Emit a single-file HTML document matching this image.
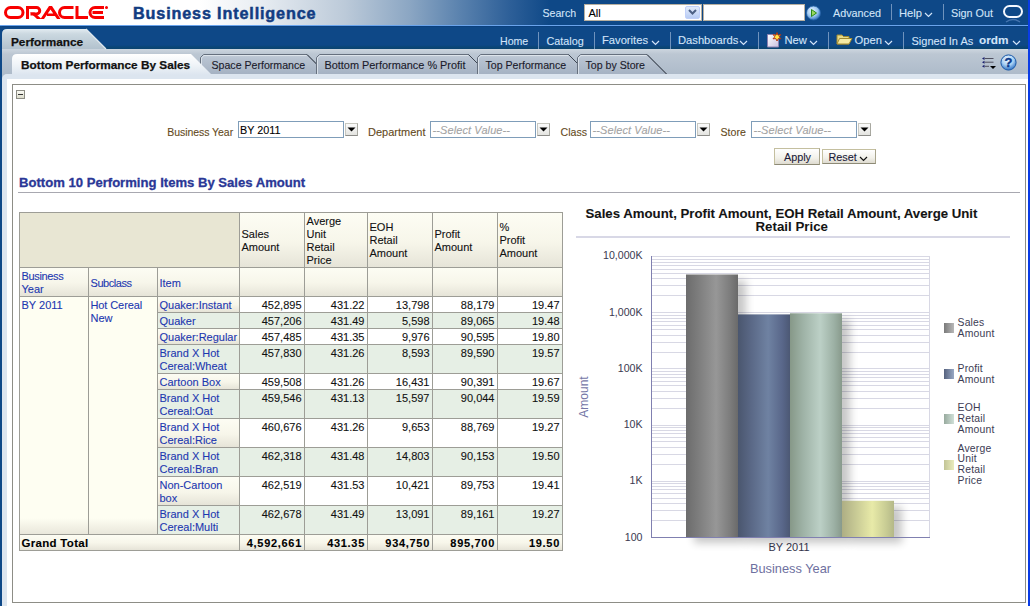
<!DOCTYPE html>
<html><head><meta charset="utf-8"><style>
*{margin:0;padding:0;box-sizing:border-box}
html,body{width:1030px;height:606px;overflow:hidden;background:#fff;font-family:"Liberation Sans",sans-serif}
.a{position:absolute;white-space:nowrap;-webkit-text-stroke:0.1px currentColor}
.c{-webkit-text-stroke:0}
</style></head><body>
<div class="a" style="left:0px;top:0px;width:1030px;height:25px;background:linear-gradient(to right,#fff 0,#fff 200px,#e8edf2 260px,#bccad9 345px,#8ba6c3 410px,#5a82ae 460px,#2d5f98 510px,#0e4887 550px,#0e4887 100%)"></div>
<div class="a" style="left:0px;top:25px;width:1030px;height:1px;background:#6aa4ec"></div>
<div class="a" style="left:0px;top:26px;width:1030px;height:23px;background:linear-gradient(#083a78 0,#0e4887 1px,#0e4887 19px,#0b4677 21px,#0a4470 23px)"></div>
<svg class="a" style="left:0;top:0" width="112" height="25" viewBox="0 0 112 25">
<g fill="none" stroke="#f80000" stroke-width="3">
<rect x="5.5" y="7.5" width="17.5" height="10" rx="5"/>
<path d="M27.5 19V7.5H36.5A3.2 3.2 0 0 1 36.5 14H30.5"/>
<path d="M73.5 7.5H64.5A5 5 0 0 0 64.5 17.5H73.5"/>
<path d="M77 6V17.5H88"/>
<path d="M104 7.5H95A5 5 0 0 0 95 17.5H104M92.5 12.5H103"/>
</g>
<path d="M30 12.5L34.5 12.5L41.5 19L37 19Z" fill="#f80000"/>
<path d="M40.5 19L49 6L52 6L60.5 19L57 19L50.5 9.5L44 19Z M47 13.5H55.5V16H47Z" fill="#f80000"/>
<circle cx="106.5" cy="7.5" r="1.5" fill="#f80000"/>
</svg>
<div class="a" style="left:133px;top:5px;font-size:16.2px;line-height:16.2px;color:#123c82;font-weight:bold;letter-spacing:0.85px;-webkit-text-stroke:0.5px #123c82">Business Intelligence</div>
<div class="a" style="left:542.5px;top:7.800000000000001px;font-size:10.6px;line-height:10.6px;color:#d2e4f8;font-weight:normal;">Search</div>
<div class="a" style="left:584px;top:4px;width:101px;height:17px;background:#fff;border:1px solid #b8b0a0;border-right:0"></div>
<div class="a" style="left:588.5px;top:7.800000000000001px;font-size:11px;line-height:11px;color:#000;font-weight:normal;">All</div>
<div class="a" style="left:685px;top:4px;width:17px;height:17px;background:#fff;border:1px solid #b8b0a0;border-left:0"></div>
<div class="a" style="left:685px;top:6px;width:15px;height:13px;background:linear-gradient(#e3ecfc,#b8ccf4);border:1px solid #c0d0fa;border-radius:2px"></div>
<svg class="a" style="left:687px;top:8px" width="11" height="9"><path d="M2 2L5.5 5.5L9 2" fill="none" stroke="#4d6185" stroke-width="2"/></svg>
<div class="a" style="left:703px;top:4px;width:102px;height:17px;background:#fff;border:1px solid #b8b0a0"></div>
<svg class="a" style="left:806px;top:5px" width="16" height="16"><defs><radialGradient id="gb" cx="40%" cy="35%" r="65%"><stop offset="0" stop-color="#eaf4ff"/><stop offset="0.6" stop-color="#9cc8f0"/><stop offset="1" stop-color="#3a78c0"/></radialGradient></defs><circle cx="7.5" cy="8" r="7" fill="url(#gb)" stroke="#2a64a8" stroke-width="0.8"/><path d="M5.5 4.5L10.5 8L5.5 11.5Z" fill="#9ad860" stroke="#2a8a18" stroke-width="1"/></svg>
<div class="a" style="left:833px;top:7.800000000000001px;font-size:10.8px;line-height:10.8px;color:#d2e4f8;font-weight:normal;">Advanced</div>
<div class="a" style="left:891px;top:4px;width:1px;height:16px;background:#6f93bd"></div>
<div class="a" style="left:899px;top:7.5px;font-size:11.2px;line-height:11.2px;color:#d2e4f8;font-weight:normal;">Help</div>
<svg class="a" style="left:924px;top:11.5px" width="9" height="6"><path d="M1 1L4.5 4.5L8 1" fill="none" stroke="#d2e4f8" stroke-width="1.2"/></svg>
<div class="a" style="left:943px;top:4px;width:1px;height:16px;background:#6f93bd"></div>
<div class="a" style="left:951px;top:7.800000000000001px;font-size:10.8px;line-height:10.8px;color:#d2e4f8;font-weight:normal;">Sign Out</div>
<svg class="a" style="left:1002px;top:4px" width="22" height="20"><rect x="2" y="2" width="18" height="11" rx="5.5" fill="none" stroke="#f4f8ff" stroke-width="2"/><path d="M4 18Q11 13 18 18" fill="none" stroke="#5c88c0" stroke-width="1.5" opacity="0.7"/></svg>
<div class="a" style="left:538px;top:32px;width:1px;height:17px;background:#6f93bd"></div>
<div class="a" style="left:594px;top:32px;width:1px;height:17px;background:#6f93bd"></div>
<div class="a" style="left:670px;top:32px;width:1px;height:17px;background:#6f93bd"></div>
<div class="a" style="left:758px;top:32px;width:1px;height:17px;background:#6f93bd"></div>
<div class="a" style="left:828px;top:32px;width:1px;height:17px;background:#6f93bd"></div>
<div class="a" style="left:903px;top:32px;width:1px;height:17px;background:#6f93bd"></div>
<div class="a" style="left:500px;top:36px;font-size:10.6px;line-height:10.6px;color:#d2e4f8;font-weight:normal;">Home</div>
<div class="a" style="left:546.5px;top:36px;font-size:10.8px;line-height:10.8px;color:#d2e4f8;font-weight:normal;">Catalog</div>
<div class="a" style="left:602px;top:35px;font-size:11.2px;line-height:11.2px;color:#d2e4f8;font-weight:normal;">Favorites</div>
<svg class="a" style="left:651px;top:40px" width="9" height="6"><path d="M1 1L4.5 4.5L8 1" fill="none" stroke="#d2e4f8" stroke-width="1.2"/></svg>
<div class="a" style="left:678px;top:35px;font-size:11.2px;line-height:11.2px;color:#d2e4f8;font-weight:normal;">Dashboards</div>
<svg class="a" style="left:739px;top:40px" width="9" height="6"><path d="M1 1L4.5 4.5L8 1" fill="none" stroke="#d2e4f8" stroke-width="1.2"/></svg>
<svg class="a" style="left:766px;top:32px" width="16" height="16">
<defs><linearGradient id="dg" x1="0" y1="0" x2="1" y2="1"><stop offset="0" stop-color="#fff"/><stop offset="1" stop-color="#c8c0e0"/></linearGradient></defs>
<path d="M1.5 2.5H9L12.5 6V15H1.5Z" fill="url(#dg)" stroke="#8a80b0" stroke-width="1"/>
<path d="M11 0.5L12 3.2L14.8 2.6L13.2 4.8L15 6.8L12.3 6.6L11 9L9.8 6.6L7 6.8L8.8 4.8L7.2 2.6L10 3.2Z" fill="#ffe848" stroke="#b02808" stroke-width="0.9"/></svg>
<div class="a" style="left:784.5px;top:35px;font-size:11.2px;line-height:11.2px;color:#d2e4f8;font-weight:normal;">New</div>
<svg class="a" style="left:809px;top:40px" width="9" height="6"><path d="M1 1L4.5 4.5L8 1" fill="none" stroke="#d2e4f8" stroke-width="1.2"/></svg>
<svg class="a" style="left:836px;top:33px" width="17" height="13">
<path d="M1 2H6L7.5 3.5H13V11H1Z" fill="#e8da88" stroke="#a08a30" stroke-width="1"/>
<path d="M1 11L3.5 5.5H16L13 11Z" fill="#f4eaa4" stroke="#a08a30" stroke-width="1"/></svg>
<div class="a" style="left:854.5px;top:35px;font-size:11.2px;line-height:11.2px;color:#d2e4f8;font-weight:normal;">Open</div>
<svg class="a" style="left:884px;top:40px" width="9" height="6"><path d="M1 1L4.5 4.5L8 1" fill="none" stroke="#d2e4f8" stroke-width="1.2"/></svg>
<div class="a" style="left:911.5px;top:36px;font-size:11.0px;line-height:11.0px;color:#d2e4f8;font-weight:normal;">Signed In As</div>
<div class="a" style="left:979px;top:35px;font-size:11.8px;line-height:11.8px;color:#d2e4f8;font-weight:bold;">ordm</div>
<svg class="a" style="left:1012px;top:40px" width="9" height="6"><path d="M1 1L4.5 4.5L8 1" fill="none" stroke="#d2e4f8" stroke-width="1.2"/></svg>
<div class="a" style="left:0px;top:26px;width:2px;height:580px;background:#0e4887"></div>
<div class="a" style="left:2px;top:49px;width:1026px;height:30px;background:linear-gradient(#cdd6df 0,#bcc7d3 5px,#aebbca 25px,#aebbca 30px)"></div>
<svg class="a" style="left:2px;top:28px" width="108" height="22">
<defs><linearGradient id="pt" x1="0" y1="0" x2="0" y2="1"><stop offset="0" stop-color="#e2ebf0"/><stop offset="0.25" stop-color="#cbd8e0"/><stop offset="1" stop-color="#b2c2ce"/></linearGradient></defs>
<path d="M0 21V6Q0 1 5 1H84L104 21Z" fill="url(#pt)"/>
<path d="M84 1L104 21" stroke="#e0e8ee" stroke-width="1.2"/>
</svg>
<div class="a" style="left:11px;top:37px;font-size:11.8px;line-height:11.8px;color:#111;font-weight:bold;-webkit-text-stroke:0.25px #111">Performance</div>
<div class="a" style="left:2px;top:74px;width:1026px;height:532px;background:#dce5ef;border-top-left-radius:5px"></div>
<div class="a" style="left:7px;top:79px;width:1021px;height:527px;background:#fff"></div>
<div class="a" style="left:12px;top:84px;width:1014px;height:519px;border:1px solid #8d8d86"></div>
<div class="a" style="left:1028px;top:0px;width:2px;height:606px;background:#0a3ce6"></div>
<svg class="a" style="left:200px;top:53px" width="131" height="21">
<defs><linearGradient id="it200" x1="0" y1="0" x2="0" y2="1"><stop offset="0" stop-color="#c4ceda"/><stop offset="0.2" stop-color="#b8c3d1"/><stop offset="1" stop-color="#a4b1c2"/></linearGradient></defs>
<path d="M0.5 22V4.5L3.5 1.5H107L127 21.5V22" fill="url(#it200)" stroke="#66707e" stroke-width="1"/>
<path d="M107 1.5L126.5 21" stroke="#3c4450" stroke-width="1"/>
<path d="M1.5 21V5L4 2.5H106.5" fill="none" stroke="#e4eaf0" stroke-width="1" opacity="0.8"/>
</svg>
<div class="a" style="left:211.5px;top:60px;font-size:10.6px;line-height:10.6px;color:#1a1a2a;font-weight:normal;">Space Performance</div>
<svg class="a" style="left:315.5px;top:53px" width="176.5" height="21">
<defs><linearGradient id="it315" x1="0" y1="0" x2="0" y2="1"><stop offset="0" stop-color="#c4ceda"/><stop offset="0.2" stop-color="#b8c3d1"/><stop offset="1" stop-color="#a4b1c2"/></linearGradient></defs>
<path d="M0.5 22V4.5L3.5 1.5H152.5L172.5 21.5V22" fill="url(#it315)" stroke="#66707e" stroke-width="1"/>
<path d="M152.5 1.5L172.0 21" stroke="#3c4450" stroke-width="1"/>
<path d="M1.5 21V5L4 2.5H152.0" fill="none" stroke="#e4eaf0" stroke-width="1" opacity="0.8"/>
</svg>
<div class="a" style="left:324.5px;top:60px;font-size:10.9px;line-height:10.9px;color:#1a1a2a;font-weight:normal;">Bottom Performance % Profit</div>
<svg class="a" style="left:476.5px;top:53px" width="115.5" height="21">
<defs><linearGradient id="it476" x1="0" y1="0" x2="0" y2="1"><stop offset="0" stop-color="#c4ceda"/><stop offset="0.2" stop-color="#b8c3d1"/><stop offset="1" stop-color="#a4b1c2"/></linearGradient></defs>
<path d="M0.5 22V4.5L3.5 1.5H91.5L111.5 21.5V22" fill="url(#it476)" stroke="#66707e" stroke-width="1"/>
<path d="M91.5 1.5L111.0 21" stroke="#3c4450" stroke-width="1"/>
<path d="M1.5 21V5L4 2.5H91.0" fill="none" stroke="#e4eaf0" stroke-width="1" opacity="0.8"/>
</svg>
<div class="a" style="left:485.5px;top:60px;font-size:10.6px;line-height:10.6px;color:#1a1a2a;font-weight:normal;">Top Performance</div>
<svg class="a" style="left:577px;top:53px" width="94" height="21">
<defs><linearGradient id="it577" x1="0" y1="0" x2="0" y2="1"><stop offset="0" stop-color="#c4ceda"/><stop offset="0.2" stop-color="#b8c3d1"/><stop offset="1" stop-color="#a4b1c2"/></linearGradient></defs>
<path d="M0.5 22V4.5L3.5 1.5H70L90 21.5V22" fill="url(#it577)" stroke="#66707e" stroke-width="1"/>
<path d="M70 1.5L89.5 21" stroke="#3c4450" stroke-width="1"/>
<path d="M1.5 21V5L4 2.5H69.5" fill="none" stroke="#e4eaf0" stroke-width="1" opacity="0.8"/>
</svg>
<div class="a" style="left:585.5px;top:60px;font-size:10.6px;line-height:10.6px;color:#1a1a2a;font-weight:normal;">Top by Store</div>
<svg class="a" style="left:11px;top:53px" width="202" height="22">
<defs><linearGradient id="at" x1="0" y1="0" x2="0" y2="1"><stop offset="0" stop-color="#ffffff"/><stop offset="0.5" stop-color="#f0f4f8"/><stop offset="1" stop-color="#dce5ef"/></linearGradient></defs>
<path d="M1 22V6Q1 1 6 1H180L200 21V22Z" fill="url(#at)"/>
</svg>
<div class="a" style="left:21px;top:59.8px;font-size:11.8px;line-height:11.8px;color:#111;font-weight:bold;-webkit-text-stroke:0.25px #111">Bottom Performance By Sales</div>
<svg class="a" style="left:980px;top:55px" width="18" height="15">
<g fill="#1a2070"><path d="M2 3.5L4.5 2V5Z"/><path d="M2 7.2L4.5 5.7V8.7Z"/><path d="M2 11.3L4.5 9.8V12.8Z"/></g>
<g stroke="#505060" stroke-width="1"><path d="M4.5 3.5H13.5M4.5 7.2H13.5M4.5 11.3H9"/></g>
<path d="M10 11H16L13 14Z" fill="#000"/></svg>
<svg class="a" style="left:1000px;top:54px" width="18" height="18">
<defs><radialGradient id="hg" cx="45%" cy="30%" r="70%"><stop offset="0" stop-color="#f4faff"/><stop offset="0.55" stop-color="#a8d0f4"/><stop offset="1" stop-color="#2c70c4"/></radialGradient></defs>
<circle cx="8.5" cy="8.5" r="7.6" fill="url(#hg)" stroke="#1c5aa8" stroke-width="1"/>
<text x="8.6" y="13.2" text-anchor="middle" font-family="Liberation Sans" font-weight="bold" font-size="13" fill="#0a3a8c" stroke="#0a3a8c" stroke-width="0.4">?</text></svg>
<div class="a" style="left:16px;top:90px;width:9px;height:9px;border:1px solid #8c8c84;background:linear-gradient(#fafaf4,#dcdccc)"></div>
<div class="a" style="left:18px;top:94px;width:5px;height:1px;background:#333"></div>
<div class="a" style="left:167.2px;top:127.0px;font-size:10.5px;line-height:10.5px;color:#644a22;font-weight:normal;letter-spacing:-0.05px">Business Year</div>
<div class="a" style="left:238px;top:121px;width:106px;height:17px;border:1px solid #7f9db9;background:#fff"></div>
<div class="a" style="left:240px;top:125.30000000000001px;font-size:10.8px;line-height:10.8px;color:#000;font-weight:normal;">BY 2011</div>
<div class="a" style="left:345px;top:123px;width:13px;height:13px;background:linear-gradient(#fbfbfb,#e4e4e0);border:1px solid #c8c8c0;border-bottom-color:#8c8c88;border-right-color:#a8a8a0"></div>
<svg class="a" style="left:347px;top:127px" width="9" height="6"><path d="M0.5 0.5H8.5L4.5 4.5Z" fill="#000"/></svg>
<div class="a" style="left:368px;top:127px;font-size:11px;line-height:11px;color:#644a22;font-weight:normal;">Department</div>
<div class="a" style="left:430px;top:121px;width:106px;height:17px;border:1px solid #7f9db9;background:#fff"></div>
<div class="a" style="left:432.5px;top:124.5px;font-size:11px;line-height:11px;color:#a4a4a4;font-weight:normal;font-style:italic;letter-spacing:0.1px">--Select Value--</div>
<div class="a" style="left:537px;top:123px;width:13px;height:13px;background:linear-gradient(#fbfbfb,#e4e4e0);border:1px solid #c8c8c0;border-bottom-color:#8c8c88;border-right-color:#a8a8a0"></div>
<svg class="a" style="left:539px;top:127px" width="9" height="6"><path d="M0.5 0.5H8.5L4.5 4.5Z" fill="#000"/></svg>
<div class="a" style="left:560.5px;top:127px;font-size:10.6px;line-height:10.6px;color:#644a22;font-weight:normal;">Class</div>
<div class="a" style="left:590px;top:121px;width:106px;height:17px;border:1px solid #7f9db9;background:#fff"></div>
<div class="a" style="left:592.5px;top:124.5px;font-size:11px;line-height:11px;color:#a4a4a4;font-weight:normal;font-style:italic;letter-spacing:0.1px">--Select Value--</div>
<div class="a" style="left:697px;top:123px;width:13px;height:13px;background:linear-gradient(#fbfbfb,#e4e4e0);border:1px solid #c8c8c0;border-bottom-color:#8c8c88;border-right-color:#a8a8a0"></div>
<svg class="a" style="left:699px;top:127px" width="9" height="6"><path d="M0.5 0.5H8.5L4.5 4.5Z" fill="#000"/></svg>
<div class="a" style="left:720.5px;top:127px;font-size:10.6px;line-height:10.6px;color:#644a22;font-weight:normal;">Store</div>
<div class="a" style="left:751px;top:121px;width:106px;height:17px;border:1px solid #7f9db9;background:#fff"></div>
<div class="a" style="left:753.5px;top:124.5px;font-size:11px;line-height:11px;color:#a4a4a4;font-weight:normal;font-style:italic;letter-spacing:0.1px">--Select Value--</div>
<div class="a" style="left:858px;top:123px;width:13px;height:13px;background:linear-gradient(#fbfbfb,#e4e4e0);border:1px solid #c8c8c0;border-bottom-color:#8c8c88;border-right-color:#a8a8a0"></div>
<svg class="a" style="left:860px;top:127px" width="9" height="6"><path d="M0.5 0.5H8.5L4.5 4.5Z" fill="#000"/></svg>
<div class="a" style="left:774px;top:148px;width:46px;height:17px;border:1px solid #c4bf9f;border-bottom-color:#8d8a76;border-right-color:#a8a48c;background:linear-gradient(#ffffff,#f2f1ea 60%,#dedbd0)"></div>
<div class="a" style="left:784px;top:152.2px;font-size:10.8px;line-height:10.8px;color:#1a1a3a;font-weight:normal;">Apply</div>
<div class="a" style="left:822px;top:149px;width:54px;height:15px;border:1px solid #c4bf9f;border-bottom-color:#8d8a76;border-right-color:#a8a48c;background:linear-gradient(#ffffff,#f2f1ea 60%,#dedbd0)"></div>
<div class="a" style="left:828.5px;top:152.2px;font-size:10.8px;line-height:10.8px;color:#1a1a3a;font-weight:normal;">Reset</div>
<svg class="a" style="left:859px;top:156px" width="9" height="6"><path d="M1 1L4.5 4.5L8 1" fill="none" stroke="#111" stroke-width="1.2"/></svg>
<div class="a" style="left:19px;top:176.3px;font-size:13.1px;line-height:13.1px;color:#2a3796;font-weight:bold;-webkit-text-stroke:0.3px #2a3796">Bottom 10 Performing Items By Sales Amount</div>
<div class="a" style="left:18px;top:192px;width:1002px;height:1px;background:#a8a8b0"></div>
<div class="a" style="left:19px;top:212px;width:220px;height:55px;background:#e8e6d3"></div>
<div class="a" style="left:239px;top:212px;width:65px;height:55px;background:linear-gradient(#fdfdf4 0,#f7f6ea 55%,#e6e4d8 100%)"></div>
<div class="a" style="left:304px;top:212px;width:63px;height:55px;background:linear-gradient(#fdfdf4 0,#f7f6ea 55%,#e6e4d8 100%)"></div>
<div class="a" style="left:367px;top:212px;width:65px;height:55px;background:linear-gradient(#fdfdf4 0,#f7f6ea 55%,#e6e4d8 100%)"></div>
<div class="a" style="left:432px;top:212px;width:65px;height:55px;background:linear-gradient(#fdfdf4 0,#f7f6ea 55%,#e6e4d8 100%)"></div>
<div class="a" style="left:497px;top:212px;width:65px;height:55px;background:linear-gradient(#fdfdf4 0,#f7f6ea 55%,#e6e4d8 100%)"></div>
<div class="a" style="left:19px;top:267px;width:69px;height:29px;background:linear-gradient(#fdfdf4 0,#f7f6ea 55%,#e6e4d8 100%)"></div>
<div class="a" style="left:88px;top:267px;width:69px;height:29px;background:linear-gradient(#fdfdf4 0,#f7f6ea 55%,#e6e4d8 100%)"></div>
<div class="a" style="left:157px;top:267px;width:82px;height:29px;background:linear-gradient(#fdfdf4 0,#f7f6ea 55%,#e6e4d8 100%)"></div>
<div class="a" style="left:239px;top:267px;width:65px;height:29px;background:linear-gradient(#fdfdf4 0,#f7f6ea 55%,#e6e4d8 100%)"></div>
<div class="a" style="left:304px;top:267px;width:63px;height:29px;background:linear-gradient(#fdfdf4 0,#f7f6ea 55%,#e6e4d8 100%)"></div>
<div class="a" style="left:367px;top:267px;width:65px;height:29px;background:linear-gradient(#fdfdf4 0,#f7f6ea 55%,#e6e4d8 100%)"></div>
<div class="a" style="left:432px;top:267px;width:65px;height:29px;background:linear-gradient(#fdfdf4 0,#f7f6ea 55%,#e6e4d8 100%)"></div>
<div class="a" style="left:497px;top:267px;width:65px;height:29px;background:linear-gradient(#fdfdf4 0,#f7f6ea 55%,#e6e4d8 100%)"></div>
<div class="a" style="left:19px;top:296px;width:138px;height:238px;background:linear-gradient(#fefef2 0,#fefef2 222px,#e9e7db 238px)"></div>
<div class="a" style="left:157px;top:296px;width:82px;height:16px;background:linear-gradient(#fdfdf4 0,#f7f6ea 55%,#e6e4d8 100%)"></div>
<div class="a" style="left:157px;top:312px;width:405px;height:16px;background:#e6efe5"></div>
<div class="a" style="left:157px;top:328px;width:82px;height:16px;background:linear-gradient(#fdfdf4 0,#f7f6ea 55%,#e6e4d8 100%)"></div>
<div class="a" style="left:157px;top:344px;width:405px;height:29px;background:#e6efe5"></div>
<div class="a" style="left:157px;top:373px;width:82px;height:16px;background:linear-gradient(#fdfdf4 0,#f7f6ea 55%,#e6e4d8 100%)"></div>
<div class="a" style="left:157px;top:389px;width:405px;height:29px;background:#e6efe5"></div>
<div class="a" style="left:157px;top:418px;width:82px;height:29px;background:linear-gradient(#fdfdf4 0,#f7f6ea 55%,#e6e4d8 100%)"></div>
<div class="a" style="left:157px;top:447px;width:405px;height:29px;background:#e6efe5"></div>
<div class="a" style="left:157px;top:476px;width:82px;height:29px;background:linear-gradient(#fdfdf4 0,#f7f6ea 55%,#e6e4d8 100%)"></div>
<div class="a" style="left:157px;top:505px;width:405px;height:29px;background:#e6efe5"></div>
<div class="a" style="left:19px;top:534px;width:543px;height:16px;background:linear-gradient(#fdfdf4 0,#f7f6ea 55%,#e6e4d8 100%)"></div>
<div class="a" style="left:19px;top:212px;width:544px;height:1px;background:#9d9d96"></div>
<div class="a" style="left:19px;top:267px;width:544px;height:1px;background:#9d9d96"></div>
<div class="a" style="left:19px;top:296px;width:544px;height:1px;background:#9d9d96"></div>
<div class="a" style="left:157px;top:312px;width:406px;height:1px;background:#9d9d96"></div>
<div class="a" style="left:157px;top:328px;width:406px;height:1px;background:#9d9d96"></div>
<div class="a" style="left:157px;top:344px;width:406px;height:1px;background:#9d9d96"></div>
<div class="a" style="left:157px;top:373px;width:406px;height:1px;background:#9d9d96"></div>
<div class="a" style="left:157px;top:389px;width:406px;height:1px;background:#9d9d96"></div>
<div class="a" style="left:157px;top:418px;width:406px;height:1px;background:#9d9d96"></div>
<div class="a" style="left:157px;top:447px;width:406px;height:1px;background:#9d9d96"></div>
<div class="a" style="left:157px;top:476px;width:406px;height:1px;background:#9d9d96"></div>
<div class="a" style="left:157px;top:505px;width:406px;height:1px;background:#9d9d96"></div>
<div class="a" style="left:19px;top:534px;width:544px;height:1px;background:#9d9d96"></div>
<div class="a" style="left:19px;top:550px;width:544px;height:1px;background:#9d9d96"></div>
<div class="a" style="left:19px;top:212px;width:1px;height:339px;background:#9d9d96"></div>
<div class="a" style="left:239px;top:212px;width:1px;height:339px;background:#9d9d96"></div>
<div class="a" style="left:304px;top:212px;width:1px;height:339px;background:#9d9d96"></div>
<div class="a" style="left:367px;top:212px;width:1px;height:339px;background:#9d9d96"></div>
<div class="a" style="left:432px;top:212px;width:1px;height:339px;background:#9d9d96"></div>
<div class="a" style="left:497px;top:212px;width:1px;height:339px;background:#9d9d96"></div>
<div class="a" style="left:562px;top:212px;width:1px;height:339px;background:#9d9d96"></div>
<div class="a" style="left:88px;top:267px;width:1px;height:267px;background:#9d9d96"></div>
<div class="a" style="left:157px;top:267px;width:1px;height:267px;background:#9d9d96"></div>
<div class="a" style="left:241.5px;top:228.8px;font-size:11px;line-height:11px;color:#111;font-weight:normal;">Sales</div>
<div class="a" style="left:241.5px;top:241.8px;font-size:11px;line-height:11px;color:#111;font-weight:normal;">Amount</div>
<div class="a" style="left:306.5px;top:215.8px;font-size:11px;line-height:11px;color:#111;font-weight:normal;">Averge</div>
<div class="a" style="left:306.5px;top:228.8px;font-size:11px;line-height:11px;color:#111;font-weight:normal;">Unit</div>
<div class="a" style="left:306.5px;top:241.8px;font-size:11px;line-height:11px;color:#111;font-weight:normal;">Retail</div>
<div class="a" style="left:306.5px;top:254.8px;font-size:11px;line-height:11px;color:#111;font-weight:normal;">Price</div>
<div class="a" style="left:369.5px;top:222.3px;font-size:11px;line-height:11px;color:#111;font-weight:normal;">EOH</div>
<div class="a" style="left:369.5px;top:235.3px;font-size:11px;line-height:11px;color:#111;font-weight:normal;">Retail</div>
<div class="a" style="left:369.5px;top:248.3px;font-size:11px;line-height:11px;color:#111;font-weight:normal;">Amount</div>
<div class="a" style="left:434.5px;top:228.8px;font-size:11px;line-height:11px;color:#111;font-weight:normal;">Profit</div>
<div class="a" style="left:434.5px;top:241.8px;font-size:11px;line-height:11px;color:#111;font-weight:normal;">Amount</div>
<div class="a" style="left:499.5px;top:222.3px;font-size:11px;line-height:11px;color:#111;font-weight:normal;">%</div>
<div class="a" style="left:499.5px;top:235.3px;font-size:11px;line-height:11px;color:#111;font-weight:normal;">Profit</div>
<div class="a" style="left:499.5px;top:248.3px;font-size:11px;line-height:11px;color:#111;font-weight:normal;">Amount</div>
<div class="a" style="left:21.5px;top:270.8px;font-size:11px;line-height:11px;color:#1d38b0;font-weight:normal;letter-spacing:-0.35px">Business</div>
<div class="a" style="left:21.5px;top:283.8px;font-size:11px;line-height:11px;color:#1d38b0;font-weight:normal;">Year</div>
<div class="a" style="left:90.5px;top:278px;font-size:11px;line-height:11px;color:#1d38b0;font-weight:normal;letter-spacing:-0.45px">Subclass</div>
<div class="a" style="left:159.5px;top:278px;font-size:11px;line-height:11px;color:#1d38b0;font-weight:normal;">Item</div>
<div class="a" style="left:21.5px;top:299.6px;font-size:11px;line-height:11px;color:#1d38b0;font-weight:normal;">BY 2011</div>
<div class="a" style="left:90.5px;top:299.6px;font-size:11px;line-height:11px;color:#1d38b0;font-weight:normal;letter-spacing:-0.1px">Hot Cereal</div>
<div class="a" style="left:90.5px;top:312.6px;font-size:11px;line-height:11px;color:#1d38b0;font-weight:normal;">New</div>
<div class="a" style="left:159.5px;top:299.8px;font-size:11px;line-height:11px;color:#1d38b0;font-weight:normal;">Quaker:Instant</div>
<div class="a" style="left:201.5px;width:100px;text-align:right;top:299.8px;font-size:11px;line-height:11px;color:#111;font-weight:normal;letter-spacing:0px">452,895</div>
<div class="a" style="left:264.5px;width:100px;text-align:right;top:299.8px;font-size:11px;line-height:11px;color:#111;font-weight:normal;letter-spacing:0px">431.22</div>
<div class="a" style="left:329.5px;width:100px;text-align:right;top:299.8px;font-size:11px;line-height:11px;color:#111;font-weight:normal;letter-spacing:0px">13,798</div>
<div class="a" style="left:394.5px;width:100px;text-align:right;top:299.8px;font-size:11px;line-height:11px;color:#111;font-weight:normal;letter-spacing:0px">88,179</div>
<div class="a" style="left:459.5px;width:100px;text-align:right;top:299.8px;font-size:11px;line-height:11px;color:#111;font-weight:normal;letter-spacing:0px">19.47</div>
<div class="a" style="left:159.5px;top:315.8px;font-size:11px;line-height:11px;color:#1d38b0;font-weight:normal;">Quaker</div>
<div class="a" style="left:201.5px;width:100px;text-align:right;top:315.8px;font-size:11px;line-height:11px;color:#111;font-weight:normal;letter-spacing:0px">457,206</div>
<div class="a" style="left:264.5px;width:100px;text-align:right;top:315.8px;font-size:11px;line-height:11px;color:#111;font-weight:normal;letter-spacing:0px">431.49</div>
<div class="a" style="left:329.5px;width:100px;text-align:right;top:315.8px;font-size:11px;line-height:11px;color:#111;font-weight:normal;letter-spacing:0px">5,598</div>
<div class="a" style="left:394.5px;width:100px;text-align:right;top:315.8px;font-size:11px;line-height:11px;color:#111;font-weight:normal;letter-spacing:0px">89,065</div>
<div class="a" style="left:459.5px;width:100px;text-align:right;top:315.8px;font-size:11px;line-height:11px;color:#111;font-weight:normal;letter-spacing:0px">19.48</div>
<div class="a" style="left:159.5px;top:331.8px;font-size:11px;line-height:11px;color:#1d38b0;font-weight:normal;">Quaker:Regular</div>
<div class="a" style="left:201.5px;width:100px;text-align:right;top:331.8px;font-size:11px;line-height:11px;color:#111;font-weight:normal;letter-spacing:0px">457,485</div>
<div class="a" style="left:264.5px;width:100px;text-align:right;top:331.8px;font-size:11px;line-height:11px;color:#111;font-weight:normal;letter-spacing:0px">431.35</div>
<div class="a" style="left:329.5px;width:100px;text-align:right;top:331.8px;font-size:11px;line-height:11px;color:#111;font-weight:normal;letter-spacing:0px">9,976</div>
<div class="a" style="left:394.5px;width:100px;text-align:right;top:331.8px;font-size:11px;line-height:11px;color:#111;font-weight:normal;letter-spacing:0px">90,595</div>
<div class="a" style="left:459.5px;width:100px;text-align:right;top:331.8px;font-size:11px;line-height:11px;color:#111;font-weight:normal;letter-spacing:0px">19.80</div>
<div class="a" style="left:159.5px;top:347.8px;font-size:11px;line-height:11px;color:#1d38b0;font-weight:normal;">Brand X Hot</div>
<div class="a" style="left:159.5px;top:360.8px;font-size:11px;line-height:11px;color:#1d38b0;font-weight:normal;">Cereal:Wheat</div>
<div class="a" style="left:201.5px;width:100px;text-align:right;top:347.8px;font-size:11px;line-height:11px;color:#111;font-weight:normal;letter-spacing:0px">457,830</div>
<div class="a" style="left:264.5px;width:100px;text-align:right;top:347.8px;font-size:11px;line-height:11px;color:#111;font-weight:normal;letter-spacing:0px">431.26</div>
<div class="a" style="left:329.5px;width:100px;text-align:right;top:347.8px;font-size:11px;line-height:11px;color:#111;font-weight:normal;letter-spacing:0px">8,593</div>
<div class="a" style="left:394.5px;width:100px;text-align:right;top:347.8px;font-size:11px;line-height:11px;color:#111;font-weight:normal;letter-spacing:0px">89,590</div>
<div class="a" style="left:459.5px;width:100px;text-align:right;top:347.8px;font-size:11px;line-height:11px;color:#111;font-weight:normal;letter-spacing:0px">19.57</div>
<div class="a" style="left:159.5px;top:376.8px;font-size:11px;line-height:11px;color:#1d38b0;font-weight:normal;">Cartoon Box</div>
<div class="a" style="left:201.5px;width:100px;text-align:right;top:376.8px;font-size:11px;line-height:11px;color:#111;font-weight:normal;letter-spacing:0px">459,508</div>
<div class="a" style="left:264.5px;width:100px;text-align:right;top:376.8px;font-size:11px;line-height:11px;color:#111;font-weight:normal;letter-spacing:0px">431.26</div>
<div class="a" style="left:329.5px;width:100px;text-align:right;top:376.8px;font-size:11px;line-height:11px;color:#111;font-weight:normal;letter-spacing:0px">16,431</div>
<div class="a" style="left:394.5px;width:100px;text-align:right;top:376.8px;font-size:11px;line-height:11px;color:#111;font-weight:normal;letter-spacing:0px">90,391</div>
<div class="a" style="left:459.5px;width:100px;text-align:right;top:376.8px;font-size:11px;line-height:11px;color:#111;font-weight:normal;letter-spacing:0px">19.67</div>
<div class="a" style="left:159.5px;top:392.8px;font-size:11px;line-height:11px;color:#1d38b0;font-weight:normal;">Brand X Hot</div>
<div class="a" style="left:159.5px;top:405.8px;font-size:11px;line-height:11px;color:#1d38b0;font-weight:normal;">Cereal:Oat</div>
<div class="a" style="left:201.5px;width:100px;text-align:right;top:392.8px;font-size:11px;line-height:11px;color:#111;font-weight:normal;letter-spacing:0px">459,546</div>
<div class="a" style="left:264.5px;width:100px;text-align:right;top:392.8px;font-size:11px;line-height:11px;color:#111;font-weight:normal;letter-spacing:0px">431.13</div>
<div class="a" style="left:329.5px;width:100px;text-align:right;top:392.8px;font-size:11px;line-height:11px;color:#111;font-weight:normal;letter-spacing:0px">15,597</div>
<div class="a" style="left:394.5px;width:100px;text-align:right;top:392.8px;font-size:11px;line-height:11px;color:#111;font-weight:normal;letter-spacing:0px">90,044</div>
<div class="a" style="left:459.5px;width:100px;text-align:right;top:392.8px;font-size:11px;line-height:11px;color:#111;font-weight:normal;letter-spacing:0px">19.59</div>
<div class="a" style="left:159.5px;top:421.8px;font-size:11px;line-height:11px;color:#1d38b0;font-weight:normal;">Brand X Hot</div>
<div class="a" style="left:159.5px;top:434.8px;font-size:11px;line-height:11px;color:#1d38b0;font-weight:normal;">Cereal:Rice</div>
<div class="a" style="left:201.5px;width:100px;text-align:right;top:421.8px;font-size:11px;line-height:11px;color:#111;font-weight:normal;letter-spacing:0px">460,676</div>
<div class="a" style="left:264.5px;width:100px;text-align:right;top:421.8px;font-size:11px;line-height:11px;color:#111;font-weight:normal;letter-spacing:0px">431.26</div>
<div class="a" style="left:329.5px;width:100px;text-align:right;top:421.8px;font-size:11px;line-height:11px;color:#111;font-weight:normal;letter-spacing:0px">9,653</div>
<div class="a" style="left:394.5px;width:100px;text-align:right;top:421.8px;font-size:11px;line-height:11px;color:#111;font-weight:normal;letter-spacing:0px">88,769</div>
<div class="a" style="left:459.5px;width:100px;text-align:right;top:421.8px;font-size:11px;line-height:11px;color:#111;font-weight:normal;letter-spacing:0px">19.27</div>
<div class="a" style="left:159.5px;top:450.8px;font-size:11px;line-height:11px;color:#1d38b0;font-weight:normal;">Brand X Hot</div>
<div class="a" style="left:159.5px;top:463.8px;font-size:11px;line-height:11px;color:#1d38b0;font-weight:normal;">Cereal:Bran</div>
<div class="a" style="left:201.5px;width:100px;text-align:right;top:450.8px;font-size:11px;line-height:11px;color:#111;font-weight:normal;letter-spacing:0px">462,318</div>
<div class="a" style="left:264.5px;width:100px;text-align:right;top:450.8px;font-size:11px;line-height:11px;color:#111;font-weight:normal;letter-spacing:0px">431.48</div>
<div class="a" style="left:329.5px;width:100px;text-align:right;top:450.8px;font-size:11px;line-height:11px;color:#111;font-weight:normal;letter-spacing:0px">14,803</div>
<div class="a" style="left:394.5px;width:100px;text-align:right;top:450.8px;font-size:11px;line-height:11px;color:#111;font-weight:normal;letter-spacing:0px">90,153</div>
<div class="a" style="left:459.5px;width:100px;text-align:right;top:450.8px;font-size:11px;line-height:11px;color:#111;font-weight:normal;letter-spacing:0px">19.50</div>
<div class="a" style="left:159.5px;top:479.8px;font-size:11px;line-height:11px;color:#1d38b0;font-weight:normal;">Non-Cartoon</div>
<div class="a" style="left:159.5px;top:492.8px;font-size:11px;line-height:11px;color:#1d38b0;font-weight:normal;">box</div>
<div class="a" style="left:201.5px;width:100px;text-align:right;top:479.8px;font-size:11px;line-height:11px;color:#111;font-weight:normal;letter-spacing:0px">462,519</div>
<div class="a" style="left:264.5px;width:100px;text-align:right;top:479.8px;font-size:11px;line-height:11px;color:#111;font-weight:normal;letter-spacing:0px">431.53</div>
<div class="a" style="left:329.5px;width:100px;text-align:right;top:479.8px;font-size:11px;line-height:11px;color:#111;font-weight:normal;letter-spacing:0px">10,421</div>
<div class="a" style="left:394.5px;width:100px;text-align:right;top:479.8px;font-size:11px;line-height:11px;color:#111;font-weight:normal;letter-spacing:0px">89,753</div>
<div class="a" style="left:459.5px;width:100px;text-align:right;top:479.8px;font-size:11px;line-height:11px;color:#111;font-weight:normal;letter-spacing:0px">19.41</div>
<div class="a" style="left:159.5px;top:508.79999999999995px;font-size:11px;line-height:11px;color:#1d38b0;font-weight:normal;">Brand X Hot</div>
<div class="a" style="left:159.5px;top:521.8px;font-size:11px;line-height:11px;color:#1d38b0;font-weight:normal;">Cereal:Multi</div>
<div class="a" style="left:201.5px;width:100px;text-align:right;top:508.79999999999995px;font-size:11px;line-height:11px;color:#111;font-weight:normal;letter-spacing:0px">462,678</div>
<div class="a" style="left:264.5px;width:100px;text-align:right;top:508.79999999999995px;font-size:11px;line-height:11px;color:#111;font-weight:normal;letter-spacing:0px">431.49</div>
<div class="a" style="left:329.5px;width:100px;text-align:right;top:508.79999999999995px;font-size:11px;line-height:11px;color:#111;font-weight:normal;letter-spacing:0px">13,091</div>
<div class="a" style="left:394.5px;width:100px;text-align:right;top:508.79999999999995px;font-size:11px;line-height:11px;color:#111;font-weight:normal;letter-spacing:0px">89,161</div>
<div class="a" style="left:459.5px;width:100px;text-align:right;top:508.79999999999995px;font-size:11px;line-height:11px;color:#111;font-weight:normal;letter-spacing:0px">19.27</div>
<div class="a" style="left:21.5px;top:538px;font-size:11.5px;line-height:11.5px;color:#000;font-weight:bold;letter-spacing:0.3px">Grand Total</div>
<div class="a" style="left:202px;width:100px;text-align:right;top:537.5px;font-size:11px;line-height:11px;color:#000;font-weight:bold;letter-spacing:0.7px">4,592,661</div>
<div class="a" style="left:265px;width:100px;text-align:right;top:537.5px;font-size:11px;line-height:11px;color:#000;font-weight:bold;letter-spacing:0.7px">431.35</div>
<div class="a" style="left:330px;width:100px;text-align:right;top:537.5px;font-size:11px;line-height:11px;color:#000;font-weight:bold;letter-spacing:0.7px">934,750</div>
<div class="a" style="left:395px;width:100px;text-align:right;top:537.5px;font-size:11px;line-height:11px;color:#000;font-weight:bold;letter-spacing:0.7px">895,700</div>
<div class="a" style="left:460px;width:100px;text-align:right;top:537.5px;font-size:11px;line-height:11px;color:#000;font-weight:bold;letter-spacing:0.7px">19.50</div>
<div class="a" style="left:585.5px;top:206.5px;font-size:13.22px;line-height:13.22px;color:#141414;font-weight:bold;-webkit-font-smoothing:antialiased">Sales Amount, Profit Amount, EOH Retail Amount, Averge Unit</div>
<div class="a" style="left:755.5px;top:219.5px;font-size:13.3px;line-height:13.3px;color:#141414;font-weight:bold;-webkit-text-stroke:0">Retail Price</div>
<div class="a" style="left:576px;top:236px;width:434px;height:2px;background:#d8d8e6"></div>
<svg class="a" style="left:0;top:0" width="1030" height="606"><defs><linearGradient id="b1" x1="0" y1="0" x2="1" y2="0"><stop offset="0" stop-color="#6c6c6c"/><stop offset="0.25" stop-color="#7e7e7e"/><stop offset="0.58" stop-color="#979797"/><stop offset="0.85" stop-color="#7c7c7c"/><stop offset="1" stop-color="#6a6a6a"/></linearGradient><linearGradient id="b2" x1="0" y1="0" x2="1" y2="0"><stop offset="0" stop-color="#4a566e"/><stop offset="0.25" stop-color="#5a6886"/><stop offset="0.58" stop-color="#6f82a2"/><stop offset="0.85" stop-color="#59678a"/><stop offset="1" stop-color="#4c5874"/></linearGradient><linearGradient id="b3" x1="0" y1="0" x2="1" y2="0"><stop offset="0" stop-color="#869888"/><stop offset="0.25" stop-color="#9eb2a6"/><stop offset="0.58" stop-color="#bcd0c6"/><stop offset="0.85" stop-color="#9cb0a4"/><stop offset="1" stop-color="#889a8c"/></linearGradient><linearGradient id="b4" x1="0" y1="0" x2="1" y2="0"><stop offset="0" stop-color="#aeae84"/><stop offset="0.25" stop-color="#c6c894"/><stop offset="0.58" stop-color="#e8eaa8"/><stop offset="0.85" stop-color="#c8cc94"/><stop offset="1" stop-color="#b4b888"/></linearGradient><linearGradient id="l1" x1="0" y1="0" x2="1" y2="0"><stop offset="0" stop-color="#7a7a7a"/><stop offset="1" stop-color="#b8b8b8"/></linearGradient><linearGradient id="l2" x1="0" y1="0" x2="1" y2="0"><stop offset="0" stop-color="#56627e"/><stop offset="1" stop-color="#98a8c4"/></linearGradient><linearGradient id="l3" x1="0" y1="0" x2="1" y2="0"><stop offset="0" stop-color="#98aa9e"/><stop offset="1" stop-color="#d0e0d8"/></linearGradient><linearGradient id="l4" x1="0" y1="0" x2="1" y2="0"><stop offset="0" stop-color="#c2c496"/><stop offset="1" stop-color="#eaecbc"/></linearGradient><filter id="sh" x="-30%" y="-30%" width="160%" height="160%"><feGaussianBlur stdDeviation="4"/></filter></defs><line x1="651" x2="929" y1="537.5" y2="537.5" stroke="#d8d8e4" stroke-width="1"/><line x1="651" x2="929" y1="520.5" y2="520.5" stroke="#d8d8e4" stroke-width="1"/><line x1="651" x2="929" y1="510.5" y2="510.5" stroke="#d8d8e4" stroke-width="1"/><line x1="651" x2="929" y1="503.5" y2="503.5" stroke="#d8d8e4" stroke-width="1"/><line x1="651" x2="929" y1="498.5" y2="498.5" stroke="#d8d8e4" stroke-width="1"/><line x1="651" x2="929" y1="493.5" y2="493.5" stroke="#d8d8e4" stroke-width="1"/><line x1="651" x2="929" y1="489.5" y2="489.5" stroke="#d8d8e4" stroke-width="1"/><line x1="651" x2="929" y1="486.5" y2="486.5" stroke="#d8d8e4" stroke-width="1"/><line x1="651" x2="929" y1="483.5" y2="483.5" stroke="#d8d8e4" stroke-width="1"/><line x1="651" x2="929" y1="481.5" y2="481.5" stroke="#d8d8e4" stroke-width="1"/><line x1="651" x2="929" y1="464.5" y2="464.5" stroke="#d8d8e4" stroke-width="1"/><line x1="651" x2="929" y1="454.5" y2="454.5" stroke="#d8d8e4" stroke-width="1"/><line x1="651" x2="929" y1="447.5" y2="447.5" stroke="#d8d8e4" stroke-width="1"/><line x1="651" x2="929" y1="441.5" y2="441.5" stroke="#d8d8e4" stroke-width="1"/><line x1="651" x2="929" y1="437.5" y2="437.5" stroke="#d8d8e4" stroke-width="1"/><line x1="651" x2="929" y1="433.5" y2="433.5" stroke="#d8d8e4" stroke-width="1"/><line x1="651" x2="929" y1="430.5" y2="430.5" stroke="#d8d8e4" stroke-width="1"/><line x1="651" x2="929" y1="427.5" y2="427.5" stroke="#d8d8e4" stroke-width="1"/><line x1="651" x2="929" y1="425.5" y2="425.5" stroke="#d8d8e4" stroke-width="1"/><line x1="651" x2="929" y1="408.5" y2="408.5" stroke="#d8d8e4" stroke-width="1"/><line x1="651" x2="929" y1="398.5" y2="398.5" stroke="#d8d8e4" stroke-width="1"/><line x1="651" x2="929" y1="391.5" y2="391.5" stroke="#d8d8e4" stroke-width="1"/><line x1="651" x2="929" y1="385.5" y2="385.5" stroke="#d8d8e4" stroke-width="1"/><line x1="651" x2="929" y1="381.5" y2="381.5" stroke="#d8d8e4" stroke-width="1"/><line x1="651" x2="929" y1="377.5" y2="377.5" stroke="#d8d8e4" stroke-width="1"/><line x1="651" x2="929" y1="374.5" y2="374.5" stroke="#d8d8e4" stroke-width="1"/><line x1="651" x2="929" y1="371.5" y2="371.5" stroke="#d8d8e4" stroke-width="1"/><line x1="651" x2="929" y1="368.5" y2="368.5" stroke="#d8d8e4" stroke-width="1"/><line x1="651" x2="929" y1="352.5" y2="352.5" stroke="#d8d8e4" stroke-width="1"/><line x1="651" x2="929" y1="342.5" y2="342.5" stroke="#d8d8e4" stroke-width="1"/><line x1="651" x2="929" y1="335.5" y2="335.5" stroke="#d8d8e4" stroke-width="1"/><line x1="651" x2="929" y1="329.5" y2="329.5" stroke="#d8d8e4" stroke-width="1"/><line x1="651" x2="929" y1="325.5" y2="325.5" stroke="#d8d8e4" stroke-width="1"/><line x1="651" x2="929" y1="321.5" y2="321.5" stroke="#d8d8e4" stroke-width="1"/><line x1="651" x2="929" y1="318.5" y2="318.5" stroke="#d8d8e4" stroke-width="1"/><line x1="651" x2="929" y1="315.5" y2="315.5" stroke="#d8d8e4" stroke-width="1"/><line x1="651" x2="929" y1="312.5" y2="312.5" stroke="#d8d8e4" stroke-width="1"/><line x1="651" x2="929" y1="295.5" y2="295.5" stroke="#d8d8e4" stroke-width="1"/><line x1="651" x2="929" y1="285.5" y2="285.5" stroke="#d8d8e4" stroke-width="1"/><line x1="651" x2="929" y1="278.5" y2="278.5" stroke="#d8d8e4" stroke-width="1"/><line x1="651" x2="929" y1="273.5" y2="273.5" stroke="#d8d8e4" stroke-width="1"/><line x1="651" x2="929" y1="269.5" y2="269.5" stroke="#d8d8e4" stroke-width="1"/><line x1="651" x2="929" y1="265.5" y2="265.5" stroke="#d8d8e4" stroke-width="1"/><line x1="651" x2="929" y1="262.5" y2="262.5" stroke="#d8d8e4" stroke-width="1"/><line x1="651" x2="929" y1="259.5" y2="259.5" stroke="#d8d8e4" stroke-width="1"/><line x1="651" x2="929" y1="256.5" y2="256.5" stroke="#d8d8e4" stroke-width="1"/><line x1="929.5" x2="929.5" y1="256" y2="537" stroke="#d8d8e4" stroke-width="1"/><rect x="694" y="280.49198129091184" width="52" height="262.50801870908816" fill="#000" opacity="0.22" filter="url(#sh)"/><rect x="746" y="320.3884633291472" width="52" height="222.6115366708528" fill="#000" opacity="0.22" filter="url(#sh)"/><rect x="798" y="319.3469143709643" width="52" height="223.65308562903567" fill="#000" opacity="0.22" filter="url(#sh)"/><rect x="850" y="506.82256510658686" width="52" height="36.177434893413135" fill="#000" opacity="0.22" filter="url(#sh)"/><rect x="686" y="274.5" width="52" height="263.0" fill="url(#b1)"/><rect x="738" y="314.4" width="52" height="223.1" fill="url(#b2)"/><rect x="790" y="313.3" width="52" height="224.2" fill="url(#b3)"/><rect x="842" y="500.8" width="52" height="36.7" fill="url(#b4)"/><line x1="651.5" x2="651.5" y1="256" y2="537" stroke="#8080b0" stroke-width="1"/><line x1="651" x2="930" y1="537.5" y2="537.5" stroke="#8080b0" stroke-width="1"/><rect x="944" y="323" width="10" height="10" fill="url(#l1)"/><rect x="944" y="369" width="10" height="10" fill="url(#l2)"/><rect x="944" y="414" width="10" height="10" fill="url(#l3)"/><rect x="944" y="460" width="10" height="10" fill="url(#l4)"/></svg>
<div class="a c" style="left:542.5px;width:100px;text-align:right;top:250.4px;font-size:10.6px;line-height:11px;color:#3a3a50">10,000K</div>
<div class="a c" style="left:542.5px;width:100px;text-align:right;top:306.7px;font-size:10.6px;line-height:11px;color:#3a3a50">1,000K</div>
<div class="a c" style="left:542.5px;width:100px;text-align:right;top:362.9px;font-size:10.6px;line-height:11px;color:#3a3a50">100K</div>
<div class="a c" style="left:542.5px;width:100px;text-align:right;top:419.2px;font-size:10.6px;line-height:11px;color:#3a3a50">10K</div>
<div class="a c" style="left:542.5px;width:100px;text-align:right;top:475.4px;font-size:10.6px;line-height:11px;color:#3a3a50">1K</div>
<div class="a c" style="left:542.5px;width:100px;text-align:right;top:531.7px;font-size:10.6px;line-height:11px;color:#3a3a50">100</div>
<div class="a c" style="left:563px;top:390px;width:42px;height:14px;font-size:12px;line-height:14px;color:#7476a6;transform:rotate(-90deg);text-align:center">Amount</div>
<div class="a c" style="left:739px;width:100px;text-align:center;top:542px;font-size:11px;line-height:11px;color:#33334a">BY 2011</div>
<div class="a c" style="left:690.5px;width:200px;text-align:center;top:562px;font-size:12.8px;line-height:13px;color:#6e70a0">Business Year</div>
<div class="a c" style="left:957.5px;top:317.4px;font-size:10.4px;line-height:11px;letter-spacing:0.2px;color:#3c3c54">Sales</div>
<div class="a c" style="left:957.5px;top:328.2px;font-size:10.4px;line-height:11px;letter-spacing:0.2px;color:#3c3c54">Amount</div>
<div class="a c" style="left:957.5px;top:363.4px;font-size:10.4px;line-height:11px;letter-spacing:0.2px;color:#3c3c54">Profit</div>
<div class="a c" style="left:957.5px;top:374.2px;font-size:10.4px;line-height:11px;letter-spacing:0.2px;color:#3c3c54">Amount</div>
<div class="a c" style="left:957.5px;top:402.0px;font-size:10.4px;line-height:11px;letter-spacing:0.2px;color:#3c3c54">EOH</div>
<div class="a c" style="left:957.5px;top:412.8px;font-size:10.4px;line-height:11px;letter-spacing:0.2px;color:#3c3c54">Retail</div>
<div class="a c" style="left:957.5px;top:423.6px;font-size:10.4px;line-height:11px;letter-spacing:0.2px;color:#3c3c54">Amount</div>
<div class="a c" style="left:957.5px;top:442.6px;font-size:10.4px;line-height:11px;letter-spacing:0.2px;color:#3c3c54">Averge</div>
<div class="a c" style="left:957.5px;top:453.4px;font-size:10.4px;line-height:11px;letter-spacing:0.2px;color:#3c3c54">Unit</div>
<div class="a c" style="left:957.5px;top:464.2px;font-size:10.4px;line-height:11px;letter-spacing:0.2px;color:#3c3c54">Retail</div>
<div class="a c" style="left:957.5px;top:475.0px;font-size:10.4px;line-height:11px;letter-spacing:0.2px;color:#3c3c54">Price</div>
</body></html>
